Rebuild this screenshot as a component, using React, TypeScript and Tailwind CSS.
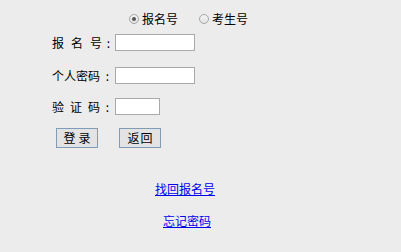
import { useState } from "react";

const font = { fontFamily: '"Noto Sans CJK SC", "Liberation Sans", sans-serif' };

function Radio({ checked, label, onClick }: { checked: boolean; label: string; onClick: () => void }) {
  return (
    <label className="flex items-center gap-[3px] cursor-pointer" onClick={onClick}>
      <span className="flex h-[10px] w-[10px] items-center justify-center rounded-full border border-[#a6a6a6] bg-gradient-to-b from-[#f4f4f4] to-[#e2e2e2]">
        {checked ? <span className="h-[4px] w-[4px] rounded-full bg-[#555555]" /> : null}
      </span>
      <span>{label}</span>
    </label>
  );
}

function FieldLabel({ chars, width }: { chars: string[]; width: string }) {
  return (
    <div className="flex w-[63px] items-center">
      <span className={`flex ${width} justify-between`}>
        {chars.map((c) => (
          <span key={c}>{c}</span>
        ))}
      </span>
      <span className="flex-1 text-center">:</span>
    </div>
  );
}

export default function App() {
  const [mode, setMode] = useState<"bmh" | "ksh">("bmh");

  return (
    <div className="min-h-[252px] w-full bg-[#ececec] text-[12px] leading-[14px] text-black" style={font}>
      <div className="flex pt-[12px] pl-[129px] gap-[21px]">
        <Radio checked={mode === "bmh"} label="报名号" onClick={() => setMode("bmh")} />
        <Radio checked={mode === "ksh"} label="考生号" onClick={() => setMode("ksh")} />
      </div>

      <div className="pl-[52px]">
        <div className="mt-[8px] flex items-center">
          <FieldLabel chars={["报", "名", "号"]} width="w-[50px]" />
          <input className="h-[17px] w-[80px] border border-[#a9a9a9] bg-white px-1 outline-none" />
        </div>
        <div className="mt-[16px] flex items-center">
          <FieldLabel chars={["个", "人", "密", "码"]} width="w-[48px]" />
          <input type="password" className="h-[17px] w-[80px] border border-[#a9a9a9] bg-white px-1 outline-none" />
        </div>
        <div className="mt-[14px] flex items-center">
          <FieldLabel chars={["验", "证", "码"]} width="w-[48px]" />
          <input className="h-[17px] w-[45px] border border-[#a9a9a9] bg-white px-1 outline-none" />
        </div>
        <div className="mt-[13px] ml-[4px] flex gap-[21px]">
          <button className="h-[20px] w-[42px] border border-[#7f9db9] bg-[#e3e3e3] tracking-[3px] pl-[3px]">登录</button>
          <button className="h-[20px] w-[42px] border border-[#7f9db9] bg-[#e3e3e3] tracking-[1px] pl-[1px]">返回</button>
        </div>
      </div>

      <div className="mt-[34px] pl-[155px]">
        <a href="#" className="text-[#0000ee] underline">找回报名号</a>
      </div>
      <div className="mt-[18px] pl-[163px]">
        <a href="#" className="text-[#0000ee] underline">忘记密码</a>
      </div>
    </div>
  );
}
